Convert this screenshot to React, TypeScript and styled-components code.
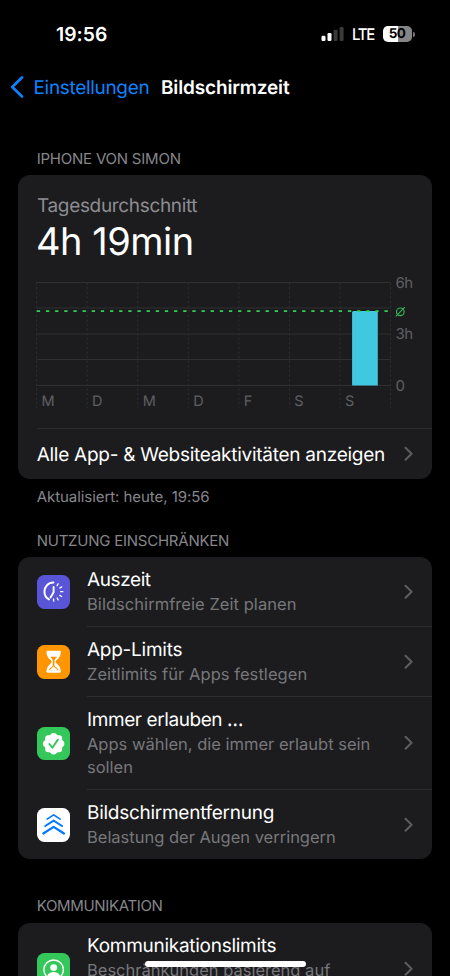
import React from "react";
import styled, { createGlobalStyle } from "styled-components";

const GlobalStyle = createGlobalStyle`
  * { box-sizing: border-box; }
  html, body { margin: 0; background: #000; overflow: hidden; }
  body {
    font-family: Inter, "Liberation Sans", sans-serif;
    text-rendering: geometricPrecision;
    -webkit-font-smoothing: antialiased;
  }
`;

const Screen = styled.main`
  position: relative;
  display: flex;
  flex-direction: column;
  width: 450px;
  height: 976px;
  overflow: hidden;
  background: #000;
  color: #fff;
`;

const StatusBar = styled.header`
  display: flex;
  flex: none;
  align-items: center;
  justify-content: space-between;
  height: 68px;
  padding: 0 35px 0 56px;
`;

const Clock = styled.time`
  font-size: 19.3px;
  font-weight: 600;
  letter-spacing: 0.05px;
`;

const StatusIcons = styled.div`
  display: flex;
  align-items: center;
`;

const Network = styled.span`
  width: 24px;
  margin: 0 7.5px 1px 7px;
  font-size: 16px;
  font-weight: 500;
  line-height: 18px;
  letter-spacing: -1.3px;
  transform: scaleX(0.93);
  transform-origin: left;
`;

const Battery = styled.span`
  display: flex;
  align-items: center;
  justify-content: center;
  width: 29px;
  height: 16px;
  padding-right: 1px;
  border-radius: 5px;
  background: linear-gradient(90deg, #fff 50%, #858585 50%);
  color: #000;
  font-size: 13.5px;
  font-weight: 700;
  letter-spacing: -0.6px;
`;

const BatteryTip = styled.span`
  width: 2px;
  height: 5px;
  margin-left: 1px;
  border-radius: 0 2px 2px 0;
  background: #777;
`;

const NavBar = styled.nav`
  display: flex;
  flex: none;
  align-items: center;
  height: 38px;
  padding-left: 10px;
`;

const BackLink = styled.a`
  display: flex;
  align-items: center;
  gap: 9.5px;
  width: 151px;
  color: #0a84ff;
  font-size: 19px;
  letter-spacing: -0.32px;
  white-space: nowrap;
`;

const PageTitle = styled.h1`
  margin: 0;
  font-size: 19px;
  font-weight: 600;
  letter-spacing: -0.15px;
`;

const Caption = styled.p<{ $top: number; $bottom: number; $tracking: number }>`
  flex: none;
  margin: ${(p) => p.$top}px 0 ${(p) => p.$bottom}px 36.7px;
  color: #86868b;
  font-size: 15px;
  line-height: 18px;
  letter-spacing: ${(p) => p.$tracking}px;
`;

const Card = styled.section<{ $height: number }>`
  display: flex;
  flex: none;
  flex-direction: column;
  height: ${(p) => p.$height}px;
  margin: 0 18px;
  overflow: hidden;
  border-radius: 12px;
  background: #1c1c1e;
`;

const Summary = styled.div`
  height: 253px;
  padding: 18px 0 0 18px;
`;

const SummaryLabel = styled.div`
  margin-left: 1px;
  color: #8d8d92;
  font-size: 19px;
  line-height: 25px;
  letter-spacing: -0.34px;
`;

const SummaryValue = styled.div`
  margin-left: 0;
  font-size: 38px;
  line-height: 48px;
  letter-spacing: -0.5px;
`;

const Chart = styled.svg`
  display: block;
  margin-top: 6px;
  font-family: Inter, "Liberation Sans", sans-serif;
  font-size: 15px;
`;

const ActivityLink = styled.div`
  display: flex;
  flex: 1;
  align-items: center;
  justify-content: space-between;
  margin-left: 18.7px;
  padding-right: 19px;
  border-top: 1px solid #2d2d30;
  font-size: 19px;
  letter-spacing: -0.27px;
  white-space: nowrap;
`;

const Row = styled.div<{ $height?: number }>`
  display: flex;
  flex: none;
  align-items: stretch;
  min-height: ${(p) => p.$height ?? 70}px;
  padding-left: 18.7px;
`;

const IconTile = styled.span<{ $color: string }>`
  display: flex;
  flex: none;
  align-self: center;
  width: 33.3px;
  height: 33.3px;
  margin-right: 17px;
  border-radius: 7.5px;
  background: ${(p) => p.$color};
`;

const RowBody = styled.div<{ $last?: boolean }>`
  display: flex;
  flex: 1;
  align-items: center;
  justify-content: space-between;
  padding: 10px 19px ${(p) => (p.$last ? 11 : 10)}px 0;
  border-bottom: ${(p) => (p.$last ? "none" : "1px solid #2d2d30")};
`;

const RowText = styled.div`
  align-self: flex-start;
`;

const RowTitle = styled.div<{ $tracking: number }>`
  font-size: 19px;
  line-height: 25px;
  letter-spacing: ${(p) => p.$tracking}px;
`;

const RowDetail = styled.div<{ $tracking: number }>`
  margin-top: 1px;
  color: #77777b;
  font-size: 16.5px;
  line-height: 23px;
  letter-spacing: ${(p) => p.$tracking}px;
  white-space: pre-line;
`;

const HomeIndicator = styled.div`
  position: absolute;
  bottom: 9px;
  left: 144.5px;
  width: 161px;
  height: 6px;
  border-radius: 3px;
  background: #fff;
`;

const ChevronSvg = styled.svg`
  flex: none;
`;

const Chevron = () => (
  <ChevronSvg width="9" height="16" viewBox="0 0 9 16" fill="none">
    <path d="M1.500 1.800 7.600 7.800l-6.100 6" stroke="#5d5d61" strokeWidth="2" strokeLinecap="round" strokeLinejoin="round" />
  </ChevronSvg>
);

const Signal = () => (
  <svg width="24" height="16" viewBox="0 0 24 16">
    <rect x="0.5" y="9.8" width="4" height="5.2" rx="1.2" fill="#fff" />
    <rect x="6.5" y="7" width="4" height="8" rx="1.2" fill="#fff" />
    <rect x="12.600" y="3.8" width="4" height="11.2" rx="1.2" fill="#3a3a3a" />
    <rect x="18.600" y="1" width="4" height="14" rx="1.2" fill="#3a3a3a" />
  </svg>
);

const DowntimeIcon = () => (
  <svg width="33.5" height="33.5" viewBox="0 0 33.5 33.5" fill="none" stroke="#fff" strokeLinecap="round">
    <path d="M16.5 7.500C11.200 7.500 7.500 11.800 7.500 16.700c0 3.300 1.700 6.200 4.500 7.700" strokeWidth="2" />
    <path d="M16.700 12v5.200l-3.100 5.300" strokeWidth="1.900" strokeLinejoin="round" />
    <path d="m20.200 10.600 1.100-1.900M22.900 13l1.900-1.100M23.700 16.700h2.300M22.900 20.400l1.900 1.100M20.200 23l1.100 1.900M16.700 24v2.200" strokeWidth="1.300" />
  </svg>
);

const HourglassIcon = () => (
  <svg width="33.5" height="33.5" viewBox="0 0 33.5 33.5" fill="none">
    <path
      d="M10.800 5.800h11.900c.9 0 1.400.7 1.300 1.600-.4 4.100-2.300 6-4.500 7.900-.9.700-.9 2.200 0 2.900 2.200 1.900 4.100 3.800 4.500 7.900.1.900-.4 1.600-1.300 1.600H10.800c-.9 0-1.400-.7-1.300-1.600.4-4.100 2.300-6 4.500-7.900.9-.7.9-2.200 0-2.900-2.200-1.900-4.100-3.800-4.500-7.900-.1-.9.400-1.600 1.300-1.600Z"
      fill="#fff"
    />
    <path d="M13.400 11.600h6.700c-.7 1.300-2.500 2.300-2.500 4.200v4.400c0 1.600 3.400 2.600 4.200 5.100H11.700c.8-2.500 4.200-3.500 4.200-5.100v-4.400c0-1.900-1.800-2.900-2.500-4.200Z" fill="#ff9500" />
    <path d="M16.750 21.200c-.8 1.700-3.300 2.200-4 4.100h8c-.7-1.900-3.200-2.400-4-4.100Z" fill="#fff" />
  </svg>
);

const BadgeIcon = () => (
  <svg width="33.5" height="33.5" viewBox="0 0 33.5 33.5" fill="none">
    <g fill="#fff">
      <circle cx="16.750" cy="16.750" r="9.600" />
      <circle cx="16.750" cy="9.250" r="3.300" />
      <circle cx="22.050" cy="11.450" r="3.300" />
      <circle cx="24.250" cy="16.750" r="3.300" />
      <circle cx="22.050" cy="22.050" r="3.300" />
      <circle cx="16.750" cy="24.250" r="3.300" />
      <circle cx="11.450" cy="22.050" r="3.300" />
      <circle cx="9.250" cy="16.750" r="3.300" />
      <circle cx="11.450" cy="11.450" r="3.300" />
    </g>
    <path d="m12.400 17 3.100 3.700 5.500-8.100" stroke="#34c759" strokeWidth="1.900" strokeLinecap="round" strokeLinejoin="round" />
  </svg>
);

const DistanceIcon = () => (
  <svg width="33.5" height="33.5" viewBox="0 0 33.5 33.5" fill="none" stroke="#007aff" strokeLinecap="round" strokeLinejoin="round">
    <path d="m10.200 11.100 6.550-4.300 6.550 4.300" strokeWidth="1.700" />
    <path d="m8.300 18 8.450-5.400L25.200 18" strokeWidth="2" />
    <path d="m6.400 25.500 10.350-6.600 10.350 6.600" strokeWidth="2.300" />
  </svg>
);

const PersonIcon = () => (
  <svg width="33.5" height="33.5" viewBox="0 0 33.5 33.5" fill="none">
    <circle cx="16.750" cy="16.750" r="9.800" stroke="#fff" strokeWidth="1.400" />
    <circle cx="16.750" cy="14.600" r="3.500" fill="#fff" />
    <path d="M10.300 22.800c1.200-2.500 3.600-3.700 6.450-3.700s5.250 1.200 6.450 3.700c-1.700 1.700-3.900 2.600-6.450 2.600s-4.750-.9-6.450-2.600Z" fill="#fff" />
  </svg>
);

const DAYS = ["M", "D", "M", "D", "F", "S", "S"];
const DAY_WIDTH = 50.57;

const UsageChart = () => (
  <Chart width="390" height="138" viewBox="-0.5 0 390 138">
    <g stroke="#2f2f32">
      <path d="M0 10.500h354" />
      <path d="M0 36h354" />
      <path d="M0 62h354" />
      <path d="M0 87.500h354" />
      <path d="M0 113.500h354" />
      {[...DAYS, ""].map((_, i) => (
        <path key={i} d={`M${i * DAY_WIDTH + 0.1} 10.500V136`} strokeDasharray="2.300 2.300" />
      ))}
    </g>
    <path d="M315.600 113.500V40.500q0-1.500 1.500-1.500h22.700q1.500 0 1.500 1.500v73Z" fill="#40c8e0" />
    <path d="M.3 39.200h353" stroke="#30d158" strokeWidth="1.800" strokeDasharray="3.300 5.850" />
    <g fill="#5f5f63">
      {DAYS.map((day, i) => (
        <text key={i} x={i * DAY_WIDTH + 5} y="134.300" fontSize="14.500">
          {day}
        </text>
      ))}
      <text x="359" y="15.900" letterSpacing="-.6">6h</text>
      <text x="359" y="67.400" letterSpacing="-.6">3h</text>
      <text x="359" y="119">0</text>
    </g>
    <g stroke="#30b454" strokeWidth="1.200" fill="none">
      <circle cx="363.800" cy="39.800" r="3.800" />
      <path d="m359.300 44.400 9-9.200" />
    </g>
  </Chart>
);

type Item = {
  title: string;
  titleTracking: number;
  detail: string;
  detailTracking: number;
  color: string;
  icon: React.ReactNode;
  height?: number;
};

const RESTRICTIONS: Item[] = [
  { title: "Auszeit", titleTracking: -0.4, detail: "Bildschirmfreie Zeit planen", detailTracking: 0.05, color: "#5856d6", icon: <DowntimeIcon /> },
  { title: "App-Limits", titleTracking: -0.25, detail: "Zeitlimits für Apps festlegen", detailTracking: 0.06, color: "#ff9500", icon: <HourglassIcon /> },
  { title: "Immer erlauben …", titleTracking: -0.41, detail: "Apps wählen, die immer erlaubt sein\nsollen", detailTracking: 0, color: "#34c759", icon: <BadgeIcon /> },
  { title: "Bildschirmentfernung", titleTracking: -0.27, detail: "Belastung der Augen verringern", detailTracking: -0.01, color: "#fff", icon: <DistanceIcon /> },
];

const COMMUNICATION: Item[] = [
  { title: "Kommunikationslimits", titleTracking: -0.28, detail: "Beschränkungen basierend auf", detailTracking: 0, color: "#34c759", icon: <PersonIcon />, height: 93 },
];

const ItemList = ({ items }: { items: Item[] }) => (
  <>
    {items.map((item, i) => (
      <Row key={item.title} $height={item.height}>
        <IconTile $color={item.color}>{item.icon}</IconTile>
        <RowBody $last={i === items.length - 1}>
          <RowText>
            <RowTitle $tracking={item.titleTracking}>{item.title}</RowTitle>
            <RowDetail $tracking={item.detailTracking}>{item.detail}</RowDetail>
          </RowText>
          <Chevron />
        </RowBody>
      </Row>
    ))}
  </>
);

export default function App() {
  return (
    <>
      <GlobalStyle />
      <Screen>
        <StatusBar>
          <Clock>19:56</Clock>
          <StatusIcons>
            <Signal />
            <Network>LTE</Network>
            <Battery>50</Battery>
            <BatteryTip />
          </StatusIcons>
        </StatusBar>
        <NavBar>
          <BackLink>
            <svg width="14" height="22" viewBox="0 0 14 22" fill="none">
              <path d="M12 1.500 2.300 11l9.700 9.500" stroke="#0a84ff" strokeWidth="2.600" strokeLinecap="round" strokeLinejoin="round" />
            </svg>
            Einstellungen
          </BackLink>
          <PageTitle>Bildschirmzeit</PageTitle>
        </NavBar>

        <Caption $top={44} $bottom={7} $tracking={-0.22}>IPHONE VON SIMON</Caption>
        <Card $height={304}>
          <Summary>
            <SummaryLabel>Tagesdurchschnitt</SummaryLabel>
            <SummaryValue>4h 19min</SummaryValue>
            <UsageChart />
          </Summary>
          <ActivityLink>
            Alle App- &amp; Websiteaktivitäten anzeigen
            <Chevron />
          </ActivityLink>
        </Card>
        <Caption $top={9} $bottom={0} $tracking={-0.06}>Aktualisiert: heute, 19:56</Caption>

        <Caption $top={26} $bottom={7} $tracking={-0.24}>NUTZUNG EINSCHRÄNKEN</Caption>
        <Card $height={302}>
          <ItemList items={RESTRICTIONS} />
        </Card>

        <Caption $top={38} $bottom={8} $tracking={-0.34}>KOMMUNIKATION</Caption>
        <Card $height={93}>
          <ItemList items={COMMUNICATION} />
        </Card>
        <HomeIndicator />
      </Screen>
    </>
  );
}
